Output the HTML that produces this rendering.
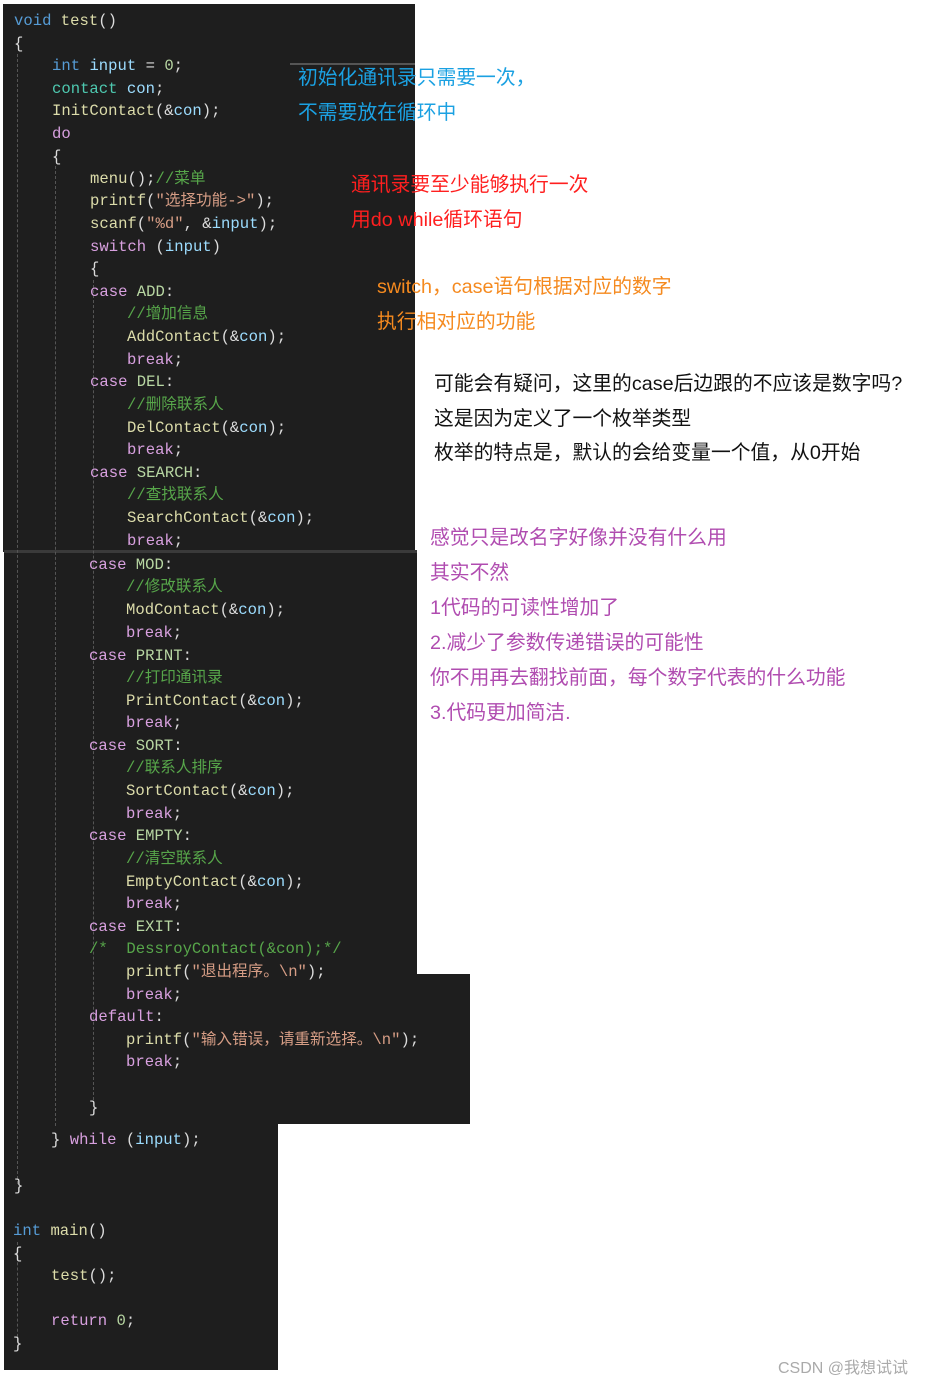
<!DOCTYPE html>
<html><head><meta charset="utf-8"><style>
body{margin:0;width:930px;height:1386px;background:#fff;position:relative;overflow:hidden;font-family:"Liberation Sans","Noto Sans CJK SC",sans-serif}
.p{position:absolute;background:#1e1e1e}
.l{position:absolute;white-space:pre;font-family:"Liberation Mono","Noto Sans CJK SC",monospace;font-size:15.6px;line-height:22px;color:#dcdcdc}
.k{color:#569cd6}.c{color:#d8a0df}.t{color:#4ec9b0}.v{color:#9cdcfe}.f{color:#dcdcaa}.s{color:#d69d85}.g{color:#57a64a}.e{color:#b8d7a3}
.a{position:absolute;white-space:nowrap;font-size:19.8px;line-height:24px}
.guide{position:absolute;border-left:1px dashed #555;width:0}
</style></head><body>
<div class="p" style="left:3px;top:4px;width:412px;height:548px"></div>
<div class="p" style="left:4px;top:552px;width:413px;height:422px"></div>
<div class="p" style="left:4px;top:974px;width:466px;height:150px"></div>
<div class="p" style="left:4px;top:1123px;width:274px;height:247px"></div>
<div style="position:absolute;left:290px;top:63px;width:125px;height:2px;background:#555"></div>
<div style="position:absolute;left:4px;top:550px;width:413px;height:3px;background:#3a3a3a"></div>
<div class="guide" style="left:17px;top:54px;height:1130px"></div>
<div class="guide" style="left:55px;top:166px;height:960px"></div>
<div class="guide" style="left:93px;top:280px;height:820px"></div>
<div class="guide" style="left:17px;top:1242px;height:100px"></div>

<div class="l" style="left:14px;top:10px"><span class="k">void</span> <span class="f">test</span>()</div>
<div class="l" style="left:14px;top:33px">{</div>
<div class="l" style="left:52px;top:55px"><span class="k">int</span> <span class="v">input</span> = <span class="e">0</span>;</div>
<div class="l" style="left:52px;top:78px"><span class="t">contact</span> <span class="v">con</span>;</div>
<div class="l" style="left:52px;top:100px"><span class="f">InitContact</span>(&amp;<span class="v">con</span>);</div>
<div class="l" style="left:52px;top:123px"><span class="c">do</span></div>
<div class="l" style="left:52px;top:146px">{</div>
<div class="l" style="left:90px;top:168px"><span class="f">menu</span>();<span class="g">//菜单</span></div>
<div class="l" style="left:90px;top:190px"><span class="f">printf</span>(<span class="s">"选择功能-&gt;"</span>);</div>
<div class="l" style="left:90px;top:213px"><span class="f">scanf</span>(<span class="s">"%d"</span>, &amp;<span class="v">input</span>);</div>
<div class="l" style="left:90px;top:236px"><span class="c">switch</span> (<span class="v">input</span>)</div>
<div class="l" style="left:90px;top:258px">{</div>
<div class="l" style="left:90px;top:281px"><span class="c">case</span> <span class="e">ADD</span>:</div>
<div class="l" style="left:127px;top:303px"><span class="g">//增加信息</span></div>
<div class="l" style="left:127px;top:326px"><span class="f">AddContact</span>(&amp;<span class="v">con</span>);</div>
<div class="l" style="left:127px;top:349px"><span class="c">break</span>;</div>
<div class="l" style="left:90px;top:371px"><span class="c">case</span> <span class="e">DEL</span>:</div>
<div class="l" style="left:127px;top:394px"><span class="g">//删除联系人</span></div>
<div class="l" style="left:127px;top:417px"><span class="f">DelContact</span>(&amp;<span class="v">con</span>);</div>
<div class="l" style="left:127px;top:439px"><span class="c">break</span>;</div>
<div class="l" style="left:90px;top:462px"><span class="c">case</span> <span class="e">SEARCH</span>:</div>
<div class="l" style="left:127px;top:484px"><span class="g">//查找联系人</span></div>
<div class="l" style="left:127px;top:507px"><span class="f">SearchContact</span>(&amp;<span class="v">con</span>);</div>
<div class="l" style="left:127px;top:530px"><span class="c">break</span>;</div>
<div class="l" style="left:89px;top:554px"><span class="c">case</span> <span class="e">MOD</span>:</div>
<div class="l" style="left:126px;top:576px"><span class="g">//修改联系人</span></div>
<div class="l" style="left:126px;top:599px"><span class="f">ModContact</span>(&amp;<span class="v">con</span>);</div>
<div class="l" style="left:126px;top:622px"><span class="c">break</span>;</div>
<div class="l" style="left:89px;top:645px"><span class="c">case</span> <span class="e">PRINT</span>:</div>
<div class="l" style="left:126px;top:667px"><span class="g">//打印通讯录</span></div>
<div class="l" style="left:126px;top:690px"><span class="f">PrintContact</span>(&amp;<span class="v">con</span>);</div>
<div class="l" style="left:126px;top:712px"><span class="c">break</span>;</div>
<div class="l" style="left:89px;top:735px"><span class="c">case</span> <span class="e">SORT</span>:</div>
<div class="l" style="left:126px;top:757px"><span class="g">//联系人排序</span></div>
<div class="l" style="left:126px;top:780px"><span class="f">SortContact</span>(&amp;<span class="v">con</span>);</div>
<div class="l" style="left:126px;top:803px"><span class="c">break</span>;</div>
<div class="l" style="left:89px;top:825px"><span class="c">case</span> <span class="e">EMPTY</span>:</div>
<div class="l" style="left:126px;top:848px"><span class="g">//清空联系人</span></div>
<div class="l" style="left:126px;top:871px"><span class="f">EmptyContact</span>(&amp;<span class="v">con</span>);</div>
<div class="l" style="left:126px;top:893px"><span class="c">break</span>;</div>
<div class="l" style="left:89px;top:916px"><span class="c">case</span> <span class="e">EXIT</span>:</div>
<div class="l" style="left:89px;top:938px"><span class="g">/*  DessroyContact(&amp;con);*/</span></div>
<div class="l" style="left:126px;top:961px"><span class="f">printf</span>(<span class="s">"退出程序。\n"</span>);</div>
<div class="l" style="left:126px;top:984px"><span class="c">break</span>;</div>
<div class="l" style="left:89px;top:1006px"><span class="c">default</span>:</div>
<div class="l" style="left:126px;top:1029px"><span class="f">printf</span>(<span class="s">"输入错误，请重新选择。\n"</span>);</div>
<div class="l" style="left:126px;top:1051px"><span class="c">break</span>;</div>
<div class="l" style="left:89px;top:1097px">}</div>
<div class="l" style="left:51px;top:1129px">} <span class="c">while</span> (<span class="v">input</span>);</div>
<div class="l" style="left:14px;top:1175px">}</div>
<div class="l" style="left:13px;top:1220px"><span class="k">int</span> <span class="f">main</span>()</div>
<div class="l" style="left:13px;top:1243px">{</div>
<div class="l" style="left:51px;top:1265px"><span class="f">test</span>();</div>
<div class="l" style="left:51px;top:1310px"><span class="c">return</span> <span class="e">0</span>;</div>
<div class="l" style="left:13px;top:1333px">}</div>

<div class="a" style="left:298px;top:66px;color:#1ba1e2">初始化通讯录只需要一次，</div>
<div class="a" style="left:298px;top:101px;color:#1ba1e2">不需要放在循环中</div>
<div class="a" style="left:351px;top:173px;color:#ff1f1f">通讯录要至少能够执行一次</div>
<div class="a" style="left:351px;top:208px;color:#ff1f1f">用do while循环语句</div>
<div class="a" style="left:377px;top:275px;color:#f58a1f">switch，case语句根据对应的数字</div>
<div class="a" style="left:377px;top:310px;color:#f58a1f">执行相对应的功能</div>
<div class="a" style="left:434px;top:372px;color:#111">可能会有疑问，这里的case后边跟的不应该是数字吗?</div>
<div class="a" style="left:434px;top:407px;color:#111">这是因为定义了一个枚举类型</div>
<div class="a" style="left:434px;top:441px;color:#111">枚举的特点是，默认的会给变量一个值，从0开始</div>
<div class="a" style="left:430px;top:526px;color:#b04cb0">感觉只是改名字好像并没有什么用</div>
<div class="a" style="left:430px;top:561px;color:#b04cb0">其实不然</div>
<div class="a" style="left:430px;top:596px;color:#b04cb0">1代码的可读性增加了</div>
<div class="a" style="left:430px;top:631px;color:#b04cb0">2.减少了参数传递错误的可能性</div>
<div class="a" style="left:430px;top:666px;color:#b04cb0">你不用再去翻找前面，每个数字代表的什么功能</div>
<div class="a" style="left:430px;top:701px;color:#b04cb0">3.代码更加简洁.</div>
<div class="a" style="left:778px;top:1357px;font-size:16px;color:#aaa">CSDN @我想试试</div>
</body></html>
